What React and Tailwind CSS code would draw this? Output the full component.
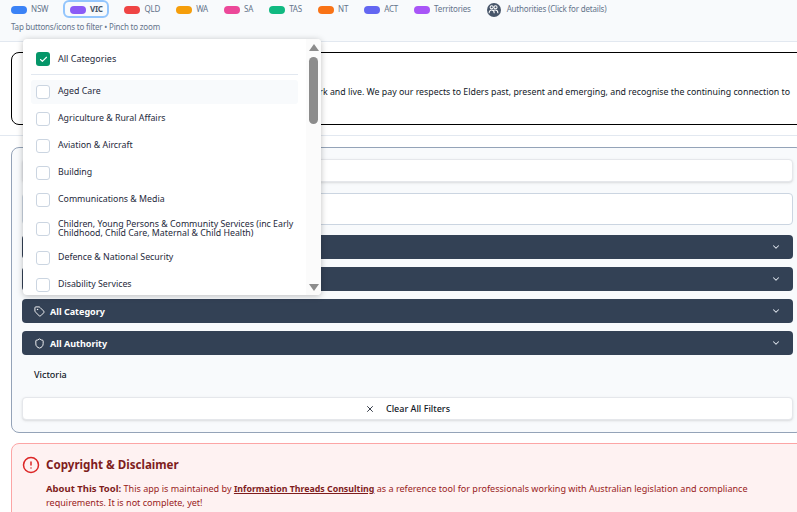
import { Check, ChevronDown, CircleAlert, Shield, Tag, X } from "lucide-react";

const states = [
  { name: "NSW", pill: "bg-[#3b82f6]" },
  { name: "VIC", pill: "bg-[#8b5cf6]", active: true },
  { name: "QLD", pill: "bg-[#ef4444]" },
  { name: "WA", pill: "bg-[#f59e0b]" },
  { name: "SA", pill: "bg-[#ec4899]" },
  { name: "TAS", pill: "bg-[#10b981]" },
  { name: "NT", pill: "bg-[#f97316]" },
  { name: "ACT", pill: "bg-[#6366f1]" },
  { name: "Territories", pill: "bg-[#a855f7]" },
];

const categories = [
  "Aged Care",
  "Agriculture & Rural Affairs",
  "Aviation & Aircraft",
  "Building",
  "Communications & Media",
  "Children, Young Persons & Community Services (inc Early Childhood, Child Care, Maternal & Child Health)",
  "Defence & National Security",
  "Disability Services",
];

const PeopleIcon = () => (
  <svg width="11" height="11" viewBox="0 0 12 12" fill="none" stroke="currentColor" strokeWidth="1.1">
    <circle cx="4" cy="3.5" r="1.7" />
    <circle cx="8.2" cy="3.5" r="1.7" />
    <path d="M1.2 10c0-2 1.2-3.4 2.8-3.4S6.8 8 6.8 10M6.2 6.8c.6-.2 1.2-.3 2-.2 1.6.1 2.6 1.5 2.6 3.4" />
  </svg>
);

const Legend = () => (
  <header className="h-[42px] border-b border-[#e2e8f0] bg-[#f8fafc] pl-[11px]">
    <div className="flex h-[18px] items-center gap-4 text-[8px] tracking-[-0.18px]">
      {states.map((s) =>
        s.active ? (
          <button
            key={s.name}
            className="-mx-px flex h-[18px] w-[46px] items-center justify-center gap-1 rounded-md border-2 border-[#93c5fd] bg-[#f8fafc] font-bold text-[#475569]"
          >
            <span className={`mt-px h-2 w-4 rounded-full ${s.pill}`} />
            {s.name}
          </button>
        ) : (
          <div key={s.name} className="flex items-center gap-1 text-[#64748b]">
            <span className={`mt-px h-2 w-4 rounded-full ${s.pill}`} />
            {s.name}
          </div>
        )
      )}
      <div className="flex items-center gap-[6px] text-[#64748b]">
        <span className="mt-px flex h-[14px] w-[14px] items-center justify-center rounded-full bg-[#475569] text-white">
          <PeopleIcon />
        </span>
        Authorities (Click for details)
      </div>
    </div>
    <p className="mt-[3px] text-[8px] tracking-[-0.19px] text-[#64748b]">Tap buttons/icons to filter • Pinch to zoom</p>
  </header>
);

const Bar = ({ icon, label }) => (
  <div className="flex h-6 w-full items-center rounded-[4px] bg-[#334155] pl-3 pr-3 text-[9px] font-bold text-white">
    {icon}
    <span className="ml-[5px] pt-px">{label}</span>
    <ChevronDown size={10} className="ml-auto text-[#e2e8f0]" strokeWidth={2.5} />
  </div>
);

const CategoryMenu = () => (
  <div className="absolute left-[23px] top-[39px] h-[256px] w-[298px] overflow-hidden rounded-[4px] bg-white shadow-[0_1px_6px_rgba(0,0,0,0.25)]">
    <div className="ml-2 w-[267px]">
      <div className="flex h-[36px] items-center border-b border-[#e2e8f0] pl-[5px] pt-[5px] text-[9px] text-[#1e293b]">
        <span className="flex h-[14px] w-[14px] items-center justify-center rounded-[3px] bg-[#059669] text-white">
          <Check size={9} strokeWidth={3} />
        </span>
        <span className="ml-2">All Categories</span>
      </div>
      <div className="mt-[5px] flex flex-col gap-[3px]">
        {categories.map((c, i) => (
          <div
            key={c}
            className={`flex min-h-6 items-center rounded-[3px] pl-[5px] text-[8.8px] leading-[9.5px] text-[#1e293b] ${
              i === 0 ? "bg-[#f8fafc]" : ""
            } ${c.length > 60 ? "h-7" : ""}`}
          >
            <span className="h-[14px] w-[14px] shrink-0 rounded-[3px] border border-[#cbd5e1] bg-white" />
            <span className="ml-2">{c}</span>
          </div>
        ))}
      </div>
    </div>
    {/* scrollbar drawn over the list */}
    <div className="absolute right-0 top-0 flex h-full w-[15px] flex-col items-center bg-[#fbfbfb]">
      <svg width="10" height="7" viewBox="0 0 10 7" className="mt-[5px] fill-[#8c8c8c]">
        <path d="M5 0l5 7H0z" />
      </svg>
      <div className="mt-[6px] h-[67px] w-[9px] rounded-full bg-[#8c8c8c]" />
      <svg width="10" height="7" viewBox="0 0 10 7" className="mt-auto mb-[4px] fill-[#8c8c8c]">
        <path d="M0 0h10L5 7z" />
      </svg>
    </div>
  </div>
);

export default function App() {
  return (
    <div
      className="relative h-[512px] w-[797px] overflow-hidden bg-white"
      style={{ fontFamily: '"Noto Sans", sans-serif' }}
    >
      <Legend />
      <div className="w-[815px] pl-[11px]">
        <section className="mt-[10px] flex h-[73px] w-[804px] items-center justify-end rounded-lg border border-black pr-[24px] pt-[8px] text-[8.8px] text-[#111827]">
          <p className="whitespace-nowrap">
            lands on which we work and live. We pay our respects to Elders past, present and emerging, and recognise the continuing connection to
          </p>
        </section>
        <div className="-ml-[11px] mt-[10px] h-px w-[815px] bg-[#e2e8f0]" />

        <section className="mt-[11px] h-[286px] w-[793px] rounded-lg border border-[#94a3b8] bg-[#f8fafc] px-[10px] pt-[11px]">
          <div className="h-[23px] rounded-[4px] border border-[#e5e7eb] bg-white shadow-sm" />
          <div className="mt-[11px] h-8 rounded-[4px] border border-[#cbd5e1] bg-white" />
          <div className="mt-[10px] flex flex-col gap-2">
            <Bar label="All Jurisdiction" />
            <Bar label="All Type" />
            <Bar icon={<Tag size={11} />} label="All Category" />
            <Bar icon={<Shield size={11} />} label="All Authority" />
          </div>
          <p className="mt-[13px] h-[14px] pl-3 text-[9px] font-medium leading-[14px] text-[#111827]">Victoria</p>
          <button className="mt-[15px] flex h-[23px] w-full items-center justify-center gap-[11px] rounded-[4px] border border-[#e5e7eb] bg-white text-[9px] font-medium text-[#111827] shadow-sm">
            <X size={10} />
            Clear All Filters
          </button>
        </section>

        <section className="mt-[10px] h-[120px] w-[804px] rounded-lg border border-[#fca5a5] bg-[#fef2f2] pl-[10px] pt-[12px]">
          <div className="flex items-center">
            <CircleAlert size={18} className="text-[#dc2626]" />
            <h2 className="ml-[6px] text-[11.6px] font-bold text-[#7f1d1d]">Copyright &amp; Disclaimer</h2>
          </div>
          <p className="mt-[8px] w-[735px] pl-[24px] text-[9.05px] leading-[13px] text-[#991b1b]">
            <strong className="text-[9.5px] text-[#7f1d1d]">About This Tool:</strong> This app is maintained by{" "}
            <a className="text-[8.8px] font-bold text-[#7f1d1d] underline">Information Threads Consulting</a> as a reference tool for professionals working with Australian legislation and compliance requirements. It is not complete, yet!
          </p>
        </section>
      </div>
      <CategoryMenu />
    </div>
  );
}
